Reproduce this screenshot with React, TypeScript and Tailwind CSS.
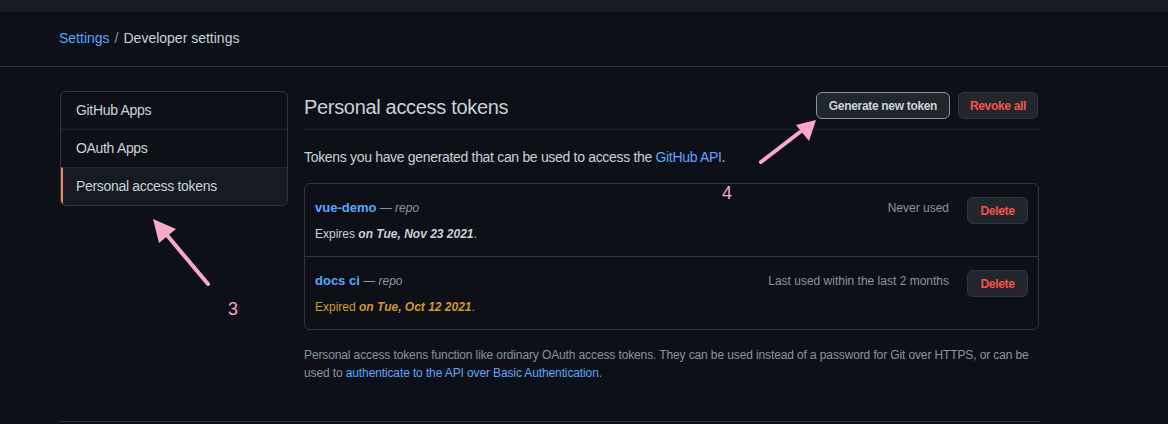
import React from 'react';

const tokens = [
  {
    name: 'vue-demo',
    scope: 'repo',
    expiredLabel: 'Expires',
    date: 'on Tue, Nov 23 2021',
    expired: false,
    used: 'Never used',
  },
  {
    name: 'docs ci',
    scope: 'repo',
    expiredLabel: 'Expired',
    date: 'on Tue, Oct 12 2021',
    expired: true,
    used: 'Last used within the last 2 months',
  },
];

const navItems = ['GitHub Apps', 'OAuth Apps', 'Personal access tokens'];

export default function App() {
  return (
    <div
      className="relative h-[424px] w-[1168px] overflow-hidden bg-[#0d1117] tracking-[-0.02em] text-[#c9d1d9]"
      style={{ fontFamily: '"Segoe UI", "Liberation Sans", Arial, sans-serif' }}
    >
      {/* top header strip */}
      <div className="h-[12px] bg-[#161b22]"></div>

      {/* breadcrumb */}
      <div className="flex h-[55px] items-center border-b border-[#30363d] pb-[1px] pl-[59px] text-[14px] tracking-normal">
        <a className="text-[#58a6ff]">Settings</a>
        <span className="mx-[5px] text-[#8b949e]">/</span>
        <span>Developer settings</span>
      </div>

      <div className="flex gap-[16px] pl-[60px] pt-[24px]">
        {/* sidebar */}
        <nav className="h-fit w-[228px] overflow-hidden rounded-[6px] border border-[#30363d]">
          {navItems.map((item, i) => {
            const active = i === navItems.length - 1;
            return (
              <div
                key={item}
                className={`flex items-center text-[14px] ${
                  i > 0 ? 'h-[38px] border-t border-[#21262d]' : 'h-[37px]'
                } ${active ? 'border-l-2 border-l-[#f78166] bg-[#161b22] pl-[13px]' : 'pl-[15px]'}`}
              >
                {item}
              </div>
            );
          })}
        </nav>

        {/* main */}
        <main className="w-[735px]">
          <div className="flex h-[39px] items-start justify-between border-b border-[#21262d] pt-[1px]">
            <h2 className="text-[20px] leading-[30px]">Personal access tokens</h2>
            <div className="flex gap-[8px] pr-[1px]">
              <button className="h-[27px] w-[134px] rounded-[6px] border border-[#8b949e] bg-[#21262d] text-[12px] font-semibold text-[#c9d1d9]">
                Generate new token
              </button>
              <button className="h-[27px] w-[80px] rounded-[6px] border border-[#30363d] bg-[#21262d] text-[12px] font-semibold text-[#f85149]">
                Revoke all
              </button>
            </div>
          </div>

          <p className="mt-[17px] text-[14px] leading-[21px]">
            Tokens you have generated that can be used to access the{' '}
            <a className="text-[#58a6ff]">GitHub API</a>.
          </p>

          <div className="mt-[15px] rounded-[6px] border border-[#30363d]">
            {tokens.map((t, i) => (
              <div
                key={t.name}
                className={`flex justify-between px-[10px] pt-[15px] ${
                  i > 0 ? 'h-[73px] border-t border-[#30363d]' : 'h-[72px]'
                }`}
              >
                <div className="text-[12px] leading-[18px] tracking-normal">
                  <div>
                    <a className="text-[13px] font-bold text-[#58a6ff]">{t.name}</a>
                    <span className="text-[#8b949e]">
                      {' '}
                      — <em>{t.scope}</em>
                    </span>
                  </div>
                  <div className={`mt-[8px] ${t.expired ? 'text-[#d29922]' : 'text-[#c9d1d9]'}`}>
                    {t.expiredLabel} <strong className="italic">{t.date}</strong>.
                  </div>
                </div>
                <div className="flex items-start gap-[18px]">
                  <span className="text-[12px] leading-[18px] tracking-normal text-[#8b949e]">{t.used}</span>
                  <button className="-mt-[2px] h-[27px] w-[61px] rounded-[6px] border border-[#30363d] bg-[#21262d] text-[12px] font-semibold text-[#f85149]">
                    Delete
                  </button>
                </div>
              </div>
            ))}
          </div>

          <p className="mt-[16px] text-[12px] leading-[18px] tracking-[-0.01em] text-[#8b949e]">
            Personal access tokens function like ordinary OAuth access tokens. They can be used instead of a password
            for Git over HTTPS, or can be used to{' '}
            <a className="text-[#58a6ff]">authenticate to the API over Basic Authentication</a>.
          </p>
        </main>
      </div>

      {/* bottom rule */}
      <div className="absolute left-[60px] top-[421px] h-px w-[980px] bg-[#30363d]"></div>

      {/* annotations */}
      <svg className="absolute left-0 top-0" width="1168" height="424">
        <line x1="208" y1="284" x2="166" y2="234" stroke="#f8a8c8" strokeWidth="4" strokeLinecap="round" />
        <polygon points="153,219 176,229 159,243" fill="#f8a8c8" />
        <line x1="761" y1="162" x2="800" y2="132" stroke="#f8a8c8" strokeWidth="4" strokeLinecap="round" />
        <polygon points="816,120 809,141 796,125" fill="#f8a8c8" />
      </svg>
      <span className="absolute left-[228px] top-[296px] text-[18px] text-[#f8a8c8]">3</span>
      <span className="absolute left-[722px] top-[180px] text-[18px] text-[#f8a8c8]">4</span>
    </div>
  );
}
